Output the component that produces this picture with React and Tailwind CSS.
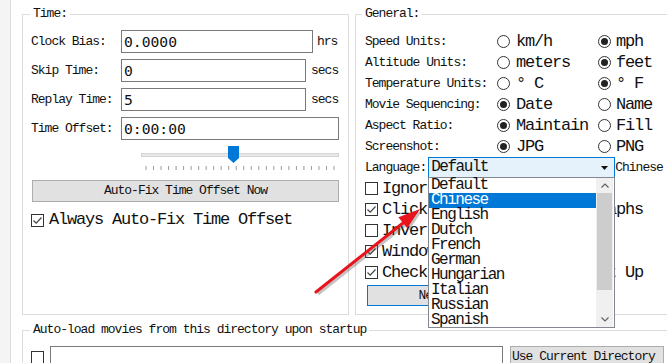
import React from "react";

const LBL = "font-['Liberation_Mono',monospace] text-[13px] leading-[16px] tracking-[-1px] text-[#111] whitespace-nowrap";
const BIG = "font-['Liberation_Mono',monospace] text-[17px] leading-[20px] tracking-[-1.2px] text-[#111] whitespace-nowrap";
const LIST = "font-['Liberation_Mono',monospace] text-[16px] leading-[15px] tracking-[-1.5px] whitespace-nowrap";
const VAL = "font-['DejaVu_Sans_Mono',monospace] text-[14.7px] leading-[21px] text-[#111] whitespace-nowrap";

function Radio({ checked }) {
  return (
    <span className="w-[13px] h-[13px] shrink-0 rounded-full border border-[#333] bg-white flex items-center justify-center">
      {checked && <span className="w-[7px] h-[7px] rounded-full bg-[#222]" />}
    </span>
  );
}

function Check({ checked }) {
  return (
    <span className="w-[13px] h-[13px] shrink-0 border border-[#333] bg-white flex items-center justify-center">
      {checked && (
        <svg width="11" height="11" viewBox="0 0 11 11">
          <polyline points="1.5,5.5 4.2,8.2 9.5,2.5" fill="none" stroke="#444" strokeWidth="1.2" />
        </svg>
      )}
    </span>
  );
}

function TimeRow({ label, value, wClass, unit, unitClass }) {
  return (
    <div className="flex items-center h-[23px]">
      <span className={LBL + " w-[90px]"}>{label}</span>
      <div className={"h-[23px] border border-[#7a7a7a] bg-white pl-[2px] flex items-center " + wClass}>
        <span className={VAL}>{value}</span>
      </div>
      {unit && <span className={LBL + " " + unitClass}>{unit}</span>}
    </div>
  );
}

function RadioRow({ label, a, b, aOn }) {
  return (
    <div className="flex items-center h-[21px]">
      <span className={LBL + " w-[132px]"}>{label}</span>
      <div className="flex items-center w-[101px]">
        <Radio checked={aOn} />
        <span className={BIG + " ml-[6px]"}>{a}</span>
      </div>
      <div className="flex items-center">
        <Radio checked={!aOn} />
        <span className={BIG + " ml-[5px]"}>{b}</span>
      </div>
    </div>
  );
}

function CheckRow({ checked, text }) {
  return (
    <div className="flex items-center h-[21px]">
      <Check checked={checked} />
      <span className={BIG + " ml-[4px]"}>{text}</span>
    </div>
  );
}

function Slider() {
  const ticks = [];
  for (let i = 0; i < 26; i++) {
    const x = 7 + i * 7.52;
    ticks.push(<line key={i} x1={x} y1="20" x2={x} y2="24" stroke="#9a9a9a" strokeWidth="1" />);
  }
  return (
    <svg width="202" height="26" viewBox="0 0 202 26" className="block">
      <rect x="2.5" y="7.5" width="197" height="3" fill="#e7e7e7" stroke="#d6d6d6" />
      {ticks}
      <polygon points="89,0 100,0 100,12 94.5,17 89,12" fill="#0078d7" />
    </svg>
  );
}

const items = ["Default", "Chinese", "English", "Dutch", "French", "German", "Hungarian", "Italian", "Russian", "Spanish"];

export default function App() {
  return (
    <div className="relative w-[667px] h-[363px] overflow-hidden bg-white flex">
      <div className="w-[11px] h-full shrink-0 bg-[#f4f4f4] border-r border-[#dcdcdc]" />
      <div className="ml-[11px] flex flex-col">
        <div className="flex gap-[6px]">
          {/* Time group */}
          <fieldset className="mt-[6px] w-[327px] h-[309px] shrink-0 border border-[#dcdcdc]">
            <legend className={LBL + " ml-[7px] px-[3px]"}>Time:</legend>
            <div className="pl-[8px] pt-[8px] flex flex-col">
              <div className="flex flex-col gap-[6px]">
                <TimeRow label="Clock Bias:" value="0.0000" wClass="w-[192px]" unit="hrs" unitClass="ml-[4px]" />
                <TimeRow label="Skip Time:" value="0" wClass="w-[185px]" unit="secs" unitClass="ml-[5px]" />
                <TimeRow label="Replay Time:" value="5" wClass="w-[185px]" unit="secs" unitClass="ml-[5px]" />
                <TimeRow label="Time Offset:" value="0:00:00" wClass="w-[218px]" />
              </div>
              <div className="mt-[6px] ml-[108px]">
                <Slider />
              </div>
              <div className="mt-[8px] ml-[1px] w-[307px] h-[22px] bg-[#e1e1e1] border border-[#adadad] flex items-center justify-center">
                <span className={LBL}>Auto-Fix Time Offset Now</span>
              </div>
              <div className="mt-[9px] h-[18px] flex items-center">
                <Check checked />
                <span className={BIG + " ml-[5px]"}>Always Auto-Fix Time Offset</span>
              </div>
            </div>
          </fieldset>

          {/* General group */}
          <fieldset className="mt-[6px] w-[330px] h-[309px] shrink-0 border border-[#dcdcdc]">
            <legend className={LBL + " ml-[6px] px-[3px]"}>General:</legend>
            <div className="pl-[9px] pt-[9px] flex flex-col">
              <RadioRow label="Speed Units:" a="km/h" b="mph" aOn={false} />
              <RadioRow label="Altitude Units:" a="meters" b="feet" aOn={false} />
              <RadioRow label="Temperature Units:" a="° C" b="° F" aOn={false} />
              <RadioRow label="Movie Sequencing:" a="Date" b="Name" aOn={true} />
              <RadioRow label="Aspect Ratio:" a="Maintain" b="Fill" aOn={true} />
              <RadioRow label="Screenshot:" a="JPG" b="PNG" aOn={true} />
              <div className="flex items-center h-[21px]">
                <span className={LBL}>Language:</span>
                <div className="ml-[2px] w-[187px] h-[21px] bg-[#e5f1fb] border border-[#0078d7] flex items-center pl-[2px] pr-[6px]">
                  <span className={LIST + " text-[#111] flex-1"}>Default</span>
                  <svg width="7" height="4" viewBox="0 0 7 4">
                    <polygon points="0,0 7,0 3.5,4" fill="#111" />
                  </svg>
                </div>
                <span className={LBL}>Chinese</span>
              </div>
              <CheckRow checked={false} text="Ignore Date Errors" />
              <CheckRow checked text="Click to Show Value on Graphs" />
              <CheckRow checked={false} text="Invert Mouse Wheel" />
              <CheckRow checked text="Windowed Mode" />
              <CheckRow checked text="Check for Updates at Start Up" />
              <div className="mt-[2px] ml-[2px] w-[130px] h-[21px] bg-[#e1e1e1] border border-[#0078d7] flex items-center justify-center">
                <span className={LBL}>Next</span>
              </div>
            </div>
          </fieldset>
        </div>

        {/* Auto-load group */}
        <fieldset className="mt-[7px] w-[660px] h-[60px] shrink-0 border border-[#dcdcdc]">
          <legend className={LBL + " ml-[7px] px-[3px]"}>Auto-load movies from this directory upon startup</legend>
          <div className="pl-[8px] pt-[8px] flex items-center">
            <Check checked={false} />
            <div className="ml-[6px] w-[453px] h-[22px] border border-[#7a7a7a] bg-white" />
            <div className="ml-[7px] h-[22px] pl-[1px] pr-[8px] bg-[#e1e1e1] border border-[#adadad] flex items-center">
              <span className={LBL}>Use Current Directory</span>
            </div>
          </div>
        </fieldset>
      </div>

      {/* Open dropdown list */}
      <div className="absolute left-[428px] top-[177px] w-[187px] h-[151px] border border-[#828790] bg-white flex">
        <div className="w-[167px] flex flex-col">
          {items.map((it) => (
            <div
              key={it}
              className={
                it === "Chinese"
                  ? LIST + " h-[15px] pl-[2px] bg-[#0078d7] text-white"
                  : LIST + " h-[15px] pl-[2px] text-[#111]"
              }
            >
              {it}
            </div>
          ))}
        </div>
        <div className="w-[17px] bg-[#f0f0f0] flex flex-col">
          <div className="h-[15px] flex items-center justify-center">
            <svg width="8" height="5" viewBox="0 0 8 5">
              <polyline points="0.5,4.5 4,1 7.5,4.5" fill="none" stroke="#606060" strokeWidth="1.2" />
            </svg>
          </div>
          <div className="mx-[1px] h-[97px] bg-[#cdcdcd]" />
          <div className="flex-1" />
          <div className="h-[15px] flex items-center justify-center">
            <svg width="8" height="5" viewBox="0 0 8 5">
              <polyline points="0.5,0.5 4,4 7.5,0.5" fill="none" stroke="#606060" strokeWidth="1.2" />
            </svg>
          </div>
        </div>
      </div>

      {/* Red arrow annotation */}
      <svg className="absolute left-0 top-0 pointer-events-none" width="667" height="363" viewBox="0 0 667 363">
        <g opacity="0.35" transform="translate(2,2)">
          <line x1="316" y1="292" x2="403" y2="223" stroke="#555" strokeWidth="3" />
          <polygon points="420,209 407.2,228.2 398.4,217.2" fill="#555" />
        </g>
        <line x1="316" y1="292" x2="403" y2="223" stroke="#e8141c" strokeWidth="3" strokeLinecap="round" />
        <polygon points="420,209 407.2,228.2 398.4,217.2" fill="#e8141c" />
      </svg>
    </div>
  );
}
